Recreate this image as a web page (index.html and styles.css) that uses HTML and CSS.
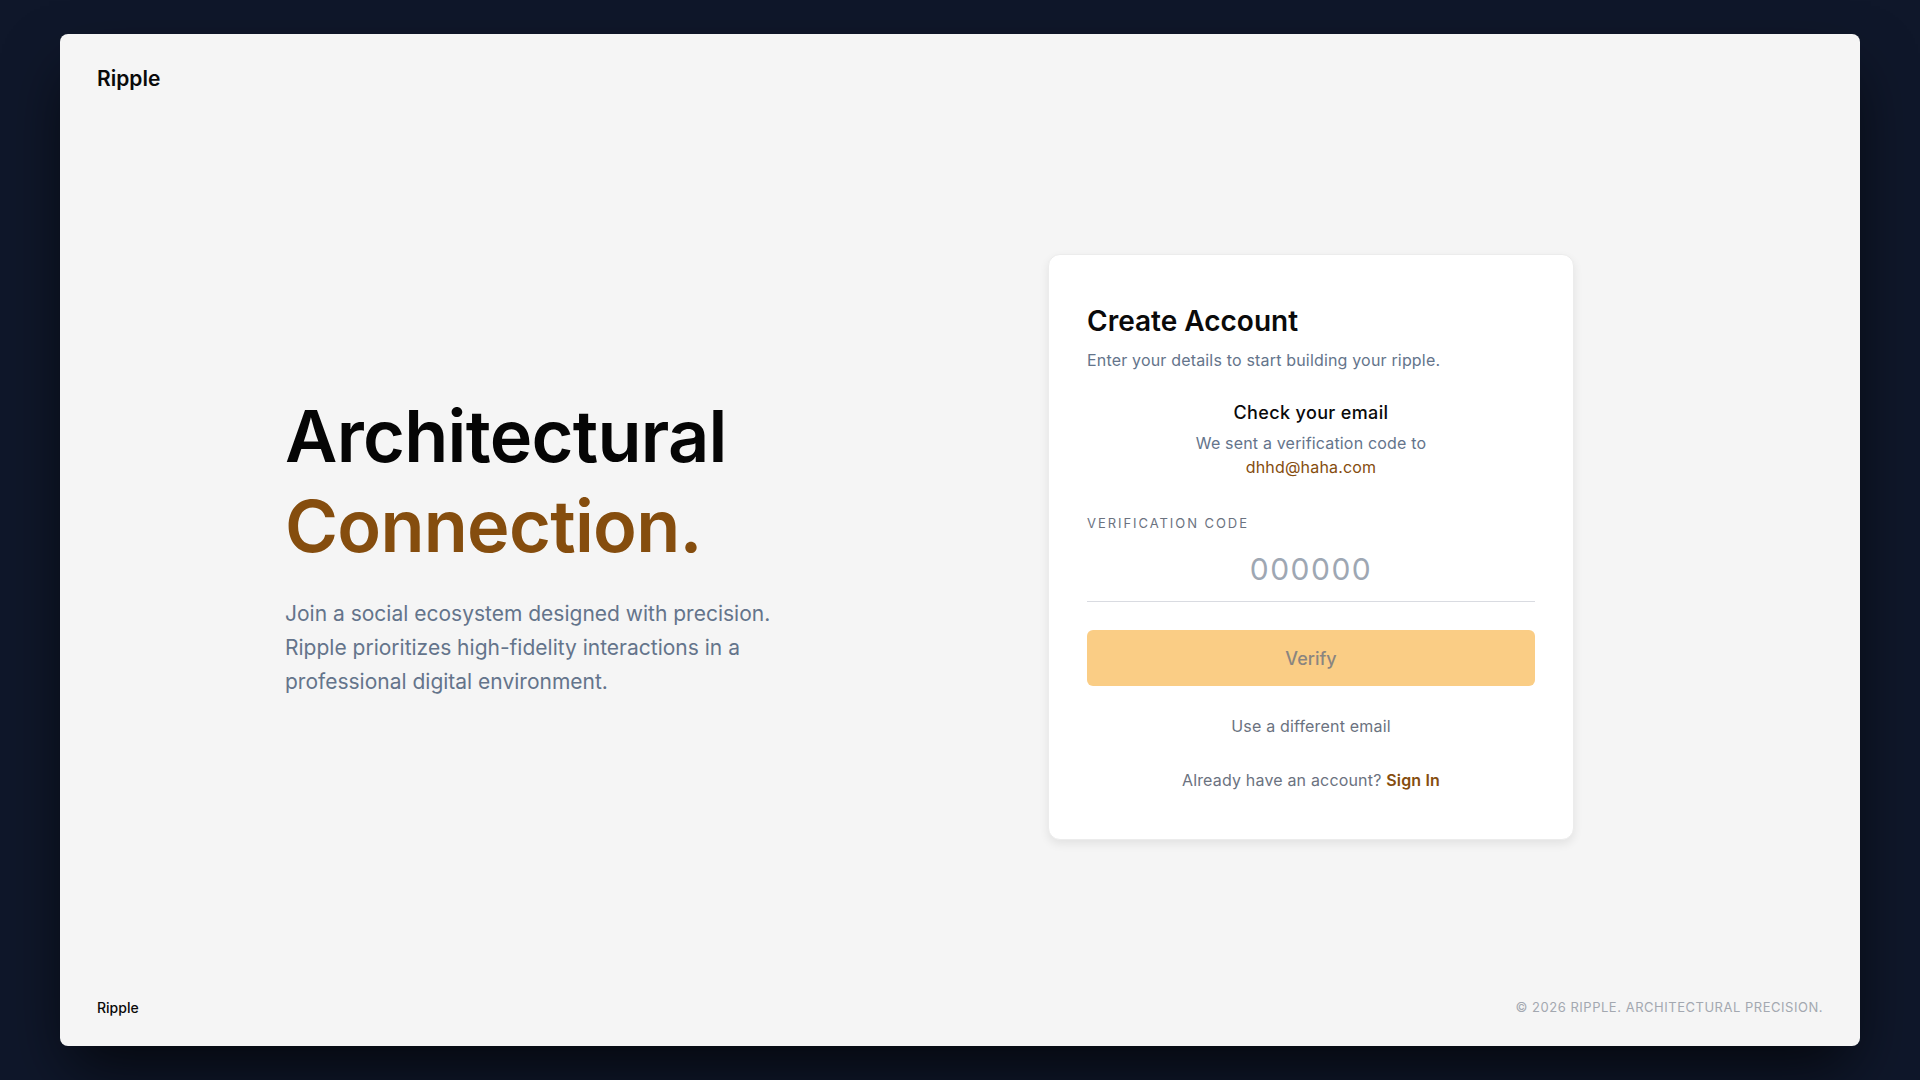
FILE: index.html
```html
<!DOCTYPE html>
<html lang="en">
<head>
<meta charset="utf-8">
<title>Ripple — Create Account</title>
<link rel="stylesheet" href="styles.css">
</head>
<body>
<div class="frame">
  <header class="topbar">
    <div class="brand">Ripple</div>
  </header>
  <main class="main">
    <section class="hero">
      <h1 class="hero-title">Architectural<br><span class="accent">Connection.</span></h1>
      <p class="hero-text">Join a social ecosystem designed with precision. Ripple prioritizes high-fidelity interactions in a professional digital environment.</p>
    </section>
    <section class="card">
      <h2 class="card-title">Create Account</h2>
      <p class="card-sub">Enter your details to start building your ripple.</p>
      <div class="check">
        <h3 class="check-title">Check your email</h3>
        <p class="check-text">We sent a verification code to<span class="check-email">dhhd@haha.com</span></p>
      </div>
      <label class="code-label" for="code">Verification Code</label>
      <input class="code-input" id="code" type="text" placeholder="000000">
      <button class="verify-btn" type="button">Verify</button>
      <p class="alt-link">Use a different email</p>
      <p class="signin">Already have an account? <a class="signin-link" href="#">Sign In</a></p>
    </section>
  </main>
  <footer class="footer">
    <div class="footer-brand">Ripple</div>
    <div class="copyright">© 2026 Ripple. Architectural Precision.</div>
  </footer>
</div>
</body>
</html>
```
FILE: styles.css
```css
* { box-sizing: border-box; }
html, body { height: 100%; }
body {
  margin: 0;
  background: #0f172a;
  font-family: Inter, "Noto Sans", "Liberation Sans", sans-serif;
  color: #0a0a0a;
}
.frame {
  margin: 34px 60px;
  height: calc(100vh - 68px);
  background: #f5f5f5;
  border-radius: 8px;
  padding: 30px 37px;
  display: flex;
  flex-direction: column;
  box-shadow: 0 30px 60px -10px rgba(0, 0, 0, 0.7);
}
.topbar { display: flex; padding-top: 3px; }
.brand {
  font-size: 21px;
  line-height: 24px;
  font-weight: 600;
  color: #0a0a0a;
}
.main {
  flex: 1;
  display: flex;
  align-items: center;
  padding-left: 188px;
  padding-top: 4px;
}
.hero {
  width: 763px;
  margin-top: -4px;
}
.hero-title {
  margin: 0;
  font-size: 72px;
  line-height: 90px;
  font-weight: 600;
  letter-spacing: -0.01em;
  color: #050505;
}
.accent { color: #854d0e; }
.hero-text {
  margin: 26px 0 0;
  max-width: 520px;
  font-size: 21px;
  line-height: 34px;
  color: #64748b;
}
.card {
  width: 526px;
  background: #ffffff;
  border: 1px solid #ececec;
  border-radius: 12px;
  padding: 50px 38px 47px;
  box-shadow: 0 4px 10px rgba(0, 0, 0, 0.08);
}
.card-title {
  margin: 0;
  font-size: 28px;
  line-height: 32px;
  font-weight: 600;
  color: #0a0a0a;
}
.card-sub {
  margin: 11px 0 0;
  font-size: 16px;
  line-height: 24px;
  letter-spacing: 0.011em;
  color: #64748b;
}
.check {
  margin-top: 27px;
  text-align: center;
}
.check-title {
  margin: 0;
  font-size: 18px;
  line-height: 28px;
  font-weight: 500;
  letter-spacing: 0.02em;
  color: #0a0a0a;
}
.check-text {
  margin: 4px 0 0;
  font-size: 16px;
  line-height: 24px;
  letter-spacing: 0.011em;
  color: #64748b;
}
.check-email {
  display: block;
  color: #854d0e;
}
.code-label {
  display: block;
  margin-top: 34px;
  font-size: 13px;
  line-height: 20px;
  letter-spacing: 0.15em;
  text-transform: uppercase;
  color: #6b7280;
}
.code-input {
  display: block;
  width: 100%;
  margin-top: 7px;
  height: 62px;
  padding: 0 0 4px;
  border: 0;
  border-bottom: 1px solid #d9dbe1;
  background: transparent;
  outline: none;
  font-family: inherit;
  font-size: 30px;
  letter-spacing: 0.05em;
  text-align: center;
  color: #0a0a0a;
}
.code-input::placeholder { color: #9ea7b3; }
.verify-btn {
  display: block;
  width: 100%;
  height: 56px;
  margin-top: 28px;
  border: 0;
  border-radius: 6px;
  background: #facd85;
  font-family: inherit;
  font-size: 18px;
  font-weight: 500;
  color: #8a8580;
}
.alt-link {
  margin: 28px 0 0;
  text-align: center;
  font-size: 16px;
  line-height: 24px;
  letter-spacing: 0.011em;
  color: #6b7280;
}
.signin {
  margin: 30px 0 0;
  text-align: center;
  font-size: 16px;
  line-height: 24px;
  letter-spacing: 0.011em;
  color: #6b7280;
}
.signin-link {
  color: #854d0e;
  font-weight: 600;
  text-decoration: none;
}
.footer {
  display: flex;
  justify-content: space-between;
  align-items: center;
}
.footer-brand {
  font-size: 14px;
  line-height: 17px;
  font-weight: 500;
  color: #0a0a0a;
}
.copyright {
  font-size: 13px;
  line-height: 17px;
  letter-spacing: 0.04em;
  text-transform: uppercase;
  color: #a3a8b0;
}
```
